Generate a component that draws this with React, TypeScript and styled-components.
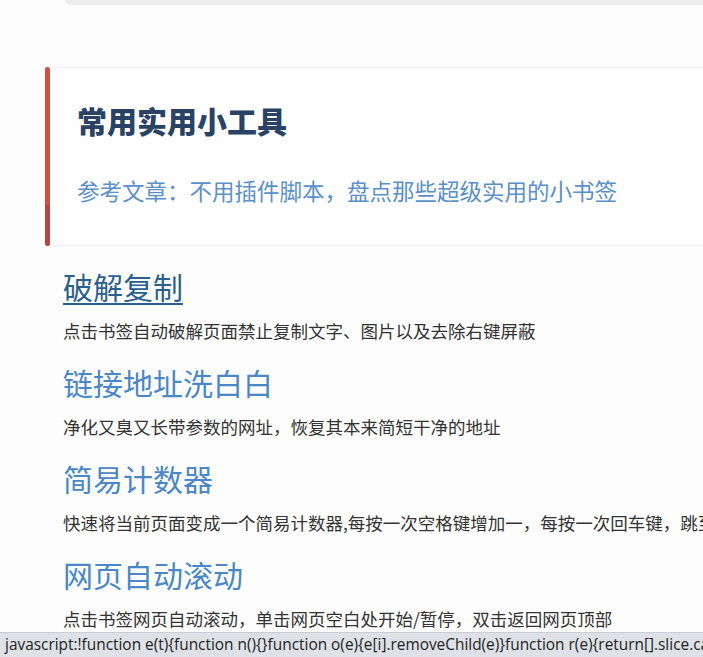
import React from 'react';
import styled, { createGlobalStyle } from 'styled-components';

interface Tool {
  name: string;
  desc: string;
  visited?: boolean;
}

const tools: Tool[] = [
  {
    name: '破解复制',
    desc: '点击书签自动破解页面禁止复制文字、图片以及去除右键屏蔽',
    visited: true,
  },
  { name: '链接地址洗白白', desc: '净化又臭又长带参数的网址，恢复其本来简短干净的地址' },
  {
    name: '简易计数器',
    desc: '快速将当前页面变成一个简易计数器,每按一次空格键增加一，每按一次回车键，跳至下一个计数',
  },
  { name: '网页自动滚动', desc: '点击书签网页自动滚动，单击网页空白处开始/暂停，双击返回网页顶部' },
];

const statusText =
  'javascript:!function e(t){function n(){}function o(e){e[i].removeChild(e)}function r(e){return[].slice.call(e)}';

const App = () => {
  return (
    <>
      <GlobalStyle />
      <Page>
        <SearchEdge />
        <Callout>
          <Bar />
          <CalloutBody>
            <Title>常用实用小工具</Title>
            <Subtitle>参考文章：不用插件脚本，盘点那些超级实用的小书签</Subtitle>
          </CalloutBody>
        </Callout>
        <ToolList>
          {tools.map((tool) => (
            <ToolItem key={tool.name}>
              <ToolName href="#" $visited={tool.visited}>
                {tool.name}
              </ToolName>
              <ToolDesc>{tool.desc}</ToolDesc>
            </ToolItem>
          ))}
        </ToolList>
      </Page>
      <StatusBubble>{statusText}</StatusBubble>
    </>
  );
};

const GlobalStyle = createGlobalStyle`
  html, body {
    margin: 0;
    padding: 0;
    background: #fdfdfd;
    overflow: hidden;
  }
  body {
    font-family: "Noto Sans CJK SC", "Noto Sans", sans-serif;
    color: #333;
  }
`;

const Page = styled.div`
  width: 703px;
  height: 657px;
  overflow: hidden;
`;

const SearchEdge = styled.div`
  margin-left: 65px;
  height: 5px;
  background: #ececec;
  border-bottom-left-radius: 6px;
`;

const Callout = styled.div`
  display: flex;
  margin: 62px 0 0 45px;
  height: 179px;
  background: #fefefe;
  border-top: 1px solid #eeeeee;
  border-bottom: 1px solid #eeeeee;
  box-sizing: border-box;
`;

const Bar = styled.div`
  flex: 0 0 5px;
  margin: -1px 0;
  border-radius: 3px;
  background: linear-gradient(to bottom, #d24d42 0, #d24d42 77%, #b64641 77%, #b64641 100%);
`;

const CalloutBody = styled.div`
  display: flex;
  flex-direction: column;
  padding: 34px 0 0 27px;
`;

const Title = styled.h2`
  margin: 0;
  font-size: 30px;
  line-height: 36px;
  font-weight: 900;
  color: #2a4365;
  white-space: nowrap;
`;

const Subtitle = styled.p`
  margin: 37px 0 0;
  font-size: 22.5px;
  line-height: 30px;
  color: #5b90c9;
  white-space: nowrap;
`;

const ToolList = styled.ul`
  list-style: none;
  margin: 22px 0 0 63px;
  padding: 0;
  display: flex;
  flex-direction: column;
  gap: 21px;
`;

const ToolItem = styled.li`
  display: flex;
  flex-direction: column;
  align-items: flex-start;
  gap: 15px;
`;

const ToolName = styled.a<{ $visited?: boolean }>`
  font-size: 30px;
  line-height: 36px;
  color: ${(p) => (p.$visited ? '#2b5f8f' : '#4a87c6')};
  text-decoration: ${(p) => (p.$visited ? 'underline' : 'none')};
  text-decoration-thickness: 2px;
  text-underline-offset: 4px;
  white-space: nowrap;
`;

const ToolDesc = styled.p`
  margin: 0;
  font-size: 17.5px;
  line-height: 24px;
  color: #333;
  white-space: nowrap;
`;

const StatusBubble = styled.div`
  position: fixed;
  left: 0;
  right: 0;
  bottom: 0;
  height: 25px;
  padding-left: 5px;
  background: #dee2e7;
  border-top: 1px solid #c9ced5;
  font-family: "Open Sans", "Liberation Sans", sans-serif;
  font-size: 15.4px;
  line-height: 24px;
  color: #222;
  white-space: nowrap;
  overflow: hidden;
  box-sizing: border-box;
`;

export default App;
